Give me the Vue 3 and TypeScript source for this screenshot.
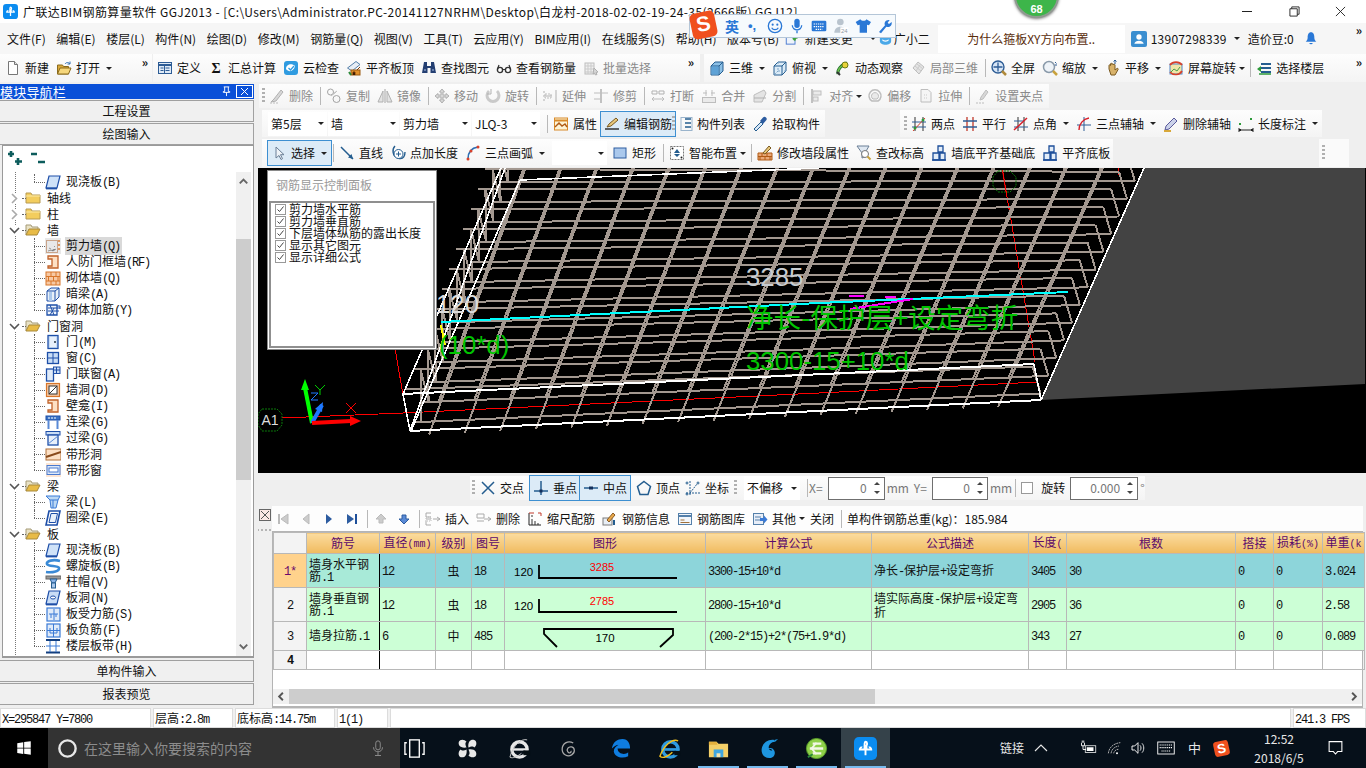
<script setup lang="ts">
import { h } from "vue";
import type { FunctionalComponent, VNode } from "vue";

// ---- small icon set, all 16x16 unless used in the taskbar (24x24) ----
const icons: Record<string, string> = {
  new: `<path d="M3.5 1.5h6l3 3v10h-9z" fill="#fff" stroke="#777"/><path d="M9.5 1.5v3h3" fill="#e4e4e4" stroke="#777"/>`,
  open: `<path d="M1.5 14V5h5l1 1.5h5V14z" fill="#d8a83a" stroke="#8a6a1c"/><path d="M1.5 14l2.5-6h11l-2.5 6z" fill="#f6d77c" stroke="#8a6a1c"/><path d="M9 4c1.5-2 3.5-2 5 0M14 1.5V4h-2.5" fill="none" stroke="#2f6fb5"/>`,
  define: `<rect x="1.5" y="2.5" width="13" height="11" fill="#dfeaf6" stroke="#2d5c95"/><path d="M1.5 5h13" stroke="#2d5c95" stroke-width="2"/><path d="M3.5 8h3M3.5 10.5h3M8.5 8h4M8.5 10.5h4M7.5 5v8.5" stroke="#2d5c95"/>`,
  sigma: `<text x="8" y="13" text-anchor="middle" font-size="14" font-weight="700" font-family="Liberation Serif" fill="#111">Σ</text>`,
  cloud: `<rect x="1" y="1" width="14" height="14" rx="3" fill="#2f9be0"/><path d="M3 9c0-5 6-6 9-3-1 5-6 7-9 3z" fill="#fff"/><path d="M5.5 8l2 2 3.5-4" fill="none" stroke="#2f9be0" stroke-width="1.3"/>`,
  flat: `<path d="M1.5 8L10 1.5l4 3L6 11z" fill="#e8eef5" stroke="#5580aa"/><rect x="5" y="10" width="9" height="5" fill="#e0902c" stroke="#9a5a10"/><path d="M7 15v-3h2v3M11 10l3-3" stroke="#7a3a08"/><path d="M3 12l2 3" stroke="#2d8a3a" stroke-width="2"/>`,
  binoc: `<path d="M3 2h3v4h4V2h3l2 11H9.5V8h-3v5H1z" fill="#243f72"/><path d="M3 10h2M11 10h2" stroke="#aac0e6"/>`,
  glasses: `<circle cx="4" cy="10" r="2.6" fill="#fff" stroke="#333" stroke-width="1.4"/><circle cx="12" cy="10" r="2.6" fill="#fff" stroke="#333" stroke-width="1.4"/><path d="M6.5 9.5h3M1.5 9L3 5M14.5 9L13 5" stroke="#333" stroke-width="1.2" fill="none"/>`,
  batch: `<rect x="2" y="3" width="9" height="11" fill="#eee" stroke="#aaa"/><path d="M2 6h9M2 9h9M2 12h9M5 3v11M8 3v11" stroke="#bbb"/><path d="M11 8l4 4-2 .5 1 2-1.500 .5-1-2-1.500 1z" fill="#ccc" stroke="#999"/>`,
  cube: `<path d="M2 6l4-4h8v9l-4 4H2z" fill="#8cc0e6" stroke="#245d8f"/><path d="M2 6h8v9M10 6l4-4" fill="none" stroke="#245d8f"/><path d="M2.500 6.500h7v8h-7z" fill="#5ea2d6"/>`,
  top: `<path d="M2 6l4-4h8v9l-4 4H2z" fill="#dcecf8" stroke="#245d8f"/><path d="M2 6h8v9M10 6l4-4" fill="none" stroke="#245d8f"/><path d="M6 2v9h8M6 11l-4 4" fill="none" stroke="#7fa6c8" stroke-dasharray="2 1"/>`,
  orbit: `<path d="M3 14c-1-4 3-9 9-11" fill="none" stroke="#1e6e2a" stroke-width="3"/><path d="M3 14c-1-4 3-9 9-11" fill="none" stroke="#6fc04e" stroke-width="1.500"/><circle cx="10" cy="5" r="3" fill="#e8d23a" stroke="#6a7a12"/><path d="M2 12l3 3" stroke="#333" stroke-width="2"/>`,
  local3d: `<path d="M3 8l5-6 6 5-5 7z" fill="#ddd" stroke="#aaa"/><path d="M5 6l6 5M7 4l6 5M6 11l4-6" stroke="#bbb"/>`,
  full: `<circle cx="7" cy="7" r="6" fill="#d8e6f6" stroke="#2d5c95" stroke-width="1.4"/><path d="M7 2.500v9M2.500 7h9" stroke="#2d5c95" stroke-width="1.300"/><path d="M11 11l4 4" stroke="#b08a3a" stroke-width="2.500"/>`,
  zoom: `<circle cx="7" cy="7" r="5.500" fill="#eef3f8" stroke="#8a9aaa" stroke-width="1.500"/><path d="M11 11l4 4" stroke="#c9a23c" stroke-width="2.500"/><path d="M13 2l1.500 1.500M13 5h2" stroke="#2d5c95"/>`,
  pan: `<path d="M4 9V5.500c0-1 1.500-1 1.500 0V4c0-1 1.500-1 1.500 0v.5c0-1 1.500-1 1.500 0V5c0-1 1.500-1 1.500 0v5l2-1.500c1-.5 1.500 .5 1 1.200L10 15H6z" fill="#d8b26a" stroke="#7a5a22"/><path d="M10 0v4M8.500 1.500L10 0l1.500 1.500" fill="none" stroke="#2d5c95"/>`,
  rotate: `<rect x="2" y="4" width="12" height="10" fill="#f0e6a8" stroke="#4f86c6"/><path d="M3 12l3-3 3 2 3-4" fill="none" stroke="#4aa04a"/><path d="M2 5a7 6 0 0 1 12 0" fill="none" stroke="#d8402a" stroke-width="1.600"/><path d="M14 11a7 6 0 0 1-12 1" fill="none" stroke="#d8402a" stroke-width="1.600"/>`,
  floors: `<path d="M5 4h10M5 8h10M5 12h10" stroke="#245d8f" stroke-width="2"/><path d="M1 9l4-3v6z" fill="#2d9a3a"/><path d="M3 14h12" stroke="#2d9a3a" stroke-width="1.500"/>`,
  del: `<path d="M2 14l5-1 7-9-2-2-7 9z" fill="#ccc" stroke="#999"/><path d="M1 15h8" stroke="#aaa" stroke-dasharray="2 1"/>`,
  copy: `<circle cx="4.500" cy="4" r="3" fill="none" stroke="#888"/><circle cx="10.500" cy="11" r="3.500" fill="none" stroke="#888"/><path d="M7 6l4-3M5 8l5-4" stroke="#aaa"/>`,
  mirror: `<path d="M8 1v14" stroke="#888"/><path d="M6 3v11H1zM10 3v11h5z" fill="#ddd" stroke="#999"/>`,
  move: `<path d="M8 1l2.500 3H9v3h3V5.500L15 8l-3 2.500V9H9v3h1.500L8 15l-2.500-3H7V9H4v1.500L1 8l3-2.500V7h3V4H5.500z" fill="#ccc" stroke="#999"/>`,
  rot: `<path d="M4 3a6 6 0 1 0 8 0" fill="none" stroke="#bbb" stroke-width="3"/><path d="M6 1v5H2" fill="none" stroke="#999"/>`,
  extend: `<path d="M14 2v12M1 4h2M1 8h9M1 12h2" stroke="#999"/><rect x="3" y="6" width="6" height="4" fill="none" stroke="#aaa" stroke-dasharray="2 1"/>`,
  trim: `<path d="M8 1v14" stroke="#999" stroke-width="1.500"/><path d="M1 5h14M1 11h6" stroke="#aaa"/>`,
  break: `<path d="M2 3h5v3H2zM9 3h5v3H9z" fill="none" stroke="#999"/><path d="M2 11h12M12 9l2 2-2 2M4 9l-2 2 2 2" fill="none" stroke="#aaa"/>`,
  merge: `<path d="M2 5h4M10 5h4M5 2v6M11 2v6" stroke="#aaa"/><rect x="1.500" y="9.500" width="13" height="5" fill="#e6e6e6" stroke="#aaa"/>`,
  split: `<path d="M2 14V7l10-5 2 3-4 9z" fill="#ddd" stroke="#aaa"/><path d="M2 10h12" stroke="#999"/>`,
  align: `<path d="M3 1v14" stroke="#999" stroke-width="1.500"/><rect x="4" y="3" width="8" height="4" fill="#e6e6e6" stroke="#aaa"/><rect x="4" y="9" width="5" height="4" fill="#e6e6e6" stroke="#aaa"/>`,
  offset: `<path d="M5 13a6 6 0 1 1 6 0z" fill="none" stroke="#aaa" stroke-width="1.500"/><path d="M6 11a3.500 3.500 0 1 1 4 0z" fill="#e6e6e6" stroke="#aaa"/>`,
  stretch: `<path d="M3 1.500h7l3 3V14H3z" fill="#f4f4f4" stroke="#aaa"/><path d="M6 7h4M6 10h4" stroke="#bbb" stroke-dasharray="1 1"/>`,
  grip: `<path d="M1 15h9" stroke="#aaa" stroke-dasharray="2 1"/><path d="M5 12l1-3 5-7 2 2-5 7z" fill="#ccc" stroke="#aaa"/>`,
  attr: `<rect x="1.500" y="2" width="13" height="12" fill="#fdf4d6" stroke="#d88a2a"/><path d="M1.500 4.500h13" stroke="#d88a2a" stroke-width="2"/><path d="M2 11l4-4 3 3 3-2 2 3" fill="none" stroke="#b05a14" stroke-width="1.400"/>`,
  editbar: `<path d="M1 13h14" stroke="#333" stroke-width="1.500"/><path d="M3 11l2-3 7-6 2 2-7 6z" fill="#e8c87a" stroke="#7a5a22"/>`,
  list: `<path d="M8 3h6M8 7h6M8 11h6" stroke="#245d8f" stroke-width="1.600"/><rect x="4" y="1.500" width="11" height="13" fill="none" stroke="#9ab4cc"/>`,
  pick: `<path d="M4 15l-2-2 7-7 2 2z" fill="#d7e6f6" stroke="#245d8f"/><path d="M8 5l3-3.500c1-1 2-1 3 0s1 2 0 3L11 8z" fill="#2d5ca0"/>`,
  two: `<path d="M4 1v14M12 1v14" stroke="#333"/><path d="M1 6h14M1 11h14" stroke="#2d5c95"/><path d="M2 15L14 2" stroke="#d8402a"/><circle cx="4" cy="12" r="1.500" fill="#2d9a3a"/><circle cx="12" cy="4" r="1.500" fill="#2d9a3a"/>`,
  para: `<path d="M5 1v14M11 1v14" stroke="#c0392b" stroke-width="1.300"/><path d="M1 5h14M1 11h14" stroke="#2d5c95" stroke-width="1.300"/>`,
  angle: `<path d="M5 1v14M11 1v14" stroke="#333"/><path d="M1 11h14M1 5h10" stroke="#2d5c95"/><path d="M1 14L14 2" stroke="#d8202a" stroke-width="1.500"/>`,
  arcaxis: `<path d="M8 1v14M1 9h14" stroke="#2d5c95"/><path d="M3 14c0-6 4-11 10-12" fill="none" stroke="#d8202a" stroke-width="1.400"/>`,
  delaxis: `<path d="M2 14l1-4 8-8 3 3-8 8z" fill="#cbd2ea" stroke="#5a5a9a"/><path d="M1 15h7" stroke="#d8a83a" stroke-width="2"/>`,
  dim: `<path d="M1 12v4M15 12v4M1 14h14" stroke="#222"/><path d="M3 14l-2 0M13 14h2" stroke="#222" stroke-width="2"/><rect x="1" y="7" width="2" height="2" fill="#2d9a3a"/><rect x="12" y="2" width="2" height="2" fill="#2d9a3a"/>`,
  cursor: `<path d="M5 2v11l3-2.500 2 4 1.500-.8-2-4H13z" fill="#eef3f8" stroke="#6a7f96"/>`,
  line: `<path d="M2 2l12 12" stroke="#245d8f" stroke-width="1.500"/><path d="M14 14l-5-1.500 3.500-3.500z" fill="#245d8f"/>`,
  ptlen: `<path d="M5 1c-3 3-3 10 3 12s7-3 7-6" fill="none" stroke="#245d8f" stroke-width="1.400"/><circle cx="8.500" cy="9" r="4.500" fill="#fff" stroke="#245d8f"/><path d="M8.500 6.500v5M6 9h5" stroke="#245d8f"/>`,
  arc: `<path d="M3 14C3 8 6 3 13 2" fill="none" stroke="#2d6fb5" stroke-width="1.600"/><circle cx="3" cy="14" r="1.500" fill="#d8402a"/><circle cx="6" cy="6" r="1.500" fill="#d8402a"/><circle cx="13" cy="2" r="1.500" fill="#d8402a"/>`,
  rect: `<rect x="2" y="3" width="12" height="10" fill="#aac8ec" stroke="#2d5ca0"/>`,
  smart: `<rect x="1.500" y="1.500" width="13" height="13" fill="#fff" stroke="#777" stroke-dasharray="2 1"/><path d="M8 4L5 8h6zM8 12l-3-3h6z" fill="#245d8f"/><circle cx="3.500" cy="3.500" r="1" fill="#222"/><circle cx="12.500" cy="12.500" r="1" fill="#222"/>`,
  wallattr: `<path d="M1 8h14v7H1z" fill="#e9a878" stroke="#b05a14"/><path d="M1 11.500h14M5 8v3.500M10 8v3.500M3 11.500V15M8 11.500V15M13 11.500V15" stroke="#b05a14"/><path d="M6 8l6-7 2 2-6 6z" fill="#e8c87a" stroke="#7a5a22"/>`,
  height: `<path d="M1 1h12l-4 7v4l-3 1V8z" fill="#dfe8f2" stroke="#6a7f96"/><circle cx="9" cy="9" r="3.500" fill="#fff" stroke="#777"/><path d="M11.500 11.500l3 3" stroke="#c9a23c" stroke-width="2"/>`,
  walltrim: `<path d="M7 1h5v6H7zM2 8h6v7H2zM9 8h5v7H9z" fill="#e3edf8" stroke="#1e4f9a" stroke-width="1.300"/><path d="M1 15h14" stroke="#1e4f9a" stroke-width="1.500"/>`,
  cross: `<path d="M2 2l12 12M14 2L2 14" stroke="#245d8f" stroke-width="1.500"/>`,
  perp: `<path d="M1 11h14" stroke="#245d8f" stroke-width="1.500"/><path d="M8 1v14" stroke="#245d8f" stroke-width="1.500"/><rect x="6.500" y="9.500" width="3" height="3" fill="#122f5c"/>`,
  mid: `<path d="M1 8h14" stroke="#245d8f" stroke-width="1.500"/><rect x="6" y="6.500" width="4" height="3" fill="#122f5c"/>`,
  vertex: `<path d="M8 1.500l6.500 5L12 14.500H4L1.500 6.500z" fill="none" stroke="#245d8f" stroke-width="1.500"/>`,
  coord: `<path d="M1 13h14M5 1v14M5 13l7-9" stroke="#245d8f" stroke-dasharray="2 1"/><circle cx="2" cy="3" r="1" fill="none" stroke="#245d8f"/><circle cx="13" cy="3" r="1" fill="none" stroke="#245d8f"/><circle cx="2" cy="14" r="1" fill="none" stroke="#245d8f"/>`,
  first: `<rect x="3" y="3" width="2" height="10" fill="#bbb"/><path d="M13 3v10L6 8z" fill="#ccc" stroke="#bbb"/>`,
  prev: `<path d="M11 3v10L5 8z" fill="#ccc" stroke="#bbb"/>`,
  next: `<path d="M5 3v10l6-5z" fill="#2d5ca0"/>`,
  last: `<path d="M3 3v10l7-5z" fill="#2d5ca0"/><rect x="11" y="3" width="2" height="10" fill="#1e4f9a"/>`,
  up: `<path d="M8 3l5 5h-3v4H6V8H3z" fill="#ccc" stroke="#bbb"/>`,
  down: `<path d="M8 13l5-5h-3V4H6v4H3z" fill="#5a8ad6" stroke="#2d5ca0"/>`,
  insert: `<path d="M1 2h5M1 8h5M1 14h5M1 2v4h5M1 10v4" fill="none" stroke="#aaa"/><path d="M8 8h7M12 6l3 2-3 2" fill="none" stroke="#aaa"/><rect x="1" y="6" width="5" height="4" fill="none" stroke="#bbb" stroke-dasharray="1 1"/>`,
  rowdel: `<path d="M1 3h7v4H1zM1 10h7" fill="none" stroke="#aaa"/><path d="M8 8h7M12 6l3 2-3 2" fill="none" stroke="#aaa"/>`,
  scale: `<path d="M2 2v12h12" fill="none" stroke="#222"/><path d="M2 2h5M11 2h3M14 2v3" stroke="#c0392b"/><path d="M5 14V8M8 14V10M11 14V12M4 5h2" stroke="#333"/>`,
  info: `<rect x="1" y="7" width="9" height="7" fill="#e8eef5" stroke="#7a7a7a"/><path d="M5 9l6-7 2 2-6 7z" fill="#e8a84a" stroke="#8a5a22"/><path d="M12 9v5" stroke="#245d8f" stroke-width="2"/>`,
  lib: `<rect x="1.500" y="2.500" width="13" height="11" fill="#f2f6fb" stroke="#5580aa"/><path d="M1.500 5h13" stroke="#5580aa" stroke-width="2"/><path d="M3.500 9h4M3.500 11.500h9" stroke="#a0703a"/>`,
  other: `<rect x="1.500" y="2.500" width="10" height="11" fill="#e8eef8" stroke="#5580aa"/><path d="M3 6h6M3 9h6" stroke="#5580aa"/><path d="M8 7h4V4.500L15.500 8.500 12 12.500V10H8z" fill="#3a7ad6"/>`,
  slab: `<path d="M4 2h11l-3 12H1z" fill="#cfe2f8" stroke="#1e4fa8" stroke-width="1.200"/><path d="M1 14.500h11" stroke="#1e4fa8" stroke-width="1.800"/>`,
  closed: `<path d="M1 13V3h5l1 2h8v8z" fill="#f3cd5e" stroke="#b79a52"/><path d="M1 6h14" stroke="#fbeaa8"/>`,
  opened: `<path d="M1 13V3h5l1 2h6v2" fill="#e9e2c6" stroke="#a59a76"/><path d="M1 13l3-6h11l-3 6z" fill="#e8bb46" stroke="#a98a3a"/>`,
  shear: `<rect x="1.500" y="2.500" width="11" height="12" fill="#e8e8e8" stroke="#c9a48a"/><path d="M3 13l3-1 2 1 3-2M4 10l2 1M9 8l1 1" stroke="#999"/><path d="M14 2v2M14 6v2M14 10v2" stroke="#d8762a" stroke-width="1.400"/>`,
  frame: `<path d="M3 2h10v12H3v-2h4V5H3z" fill="#fde0c4" stroke="#c0622a" stroke-width="1.300"/>`,
  brick: `<rect x="1" y="2" width="14" height="13" fill="#f7c9a4" stroke="#d8762a"/><path d="M1 6.500h14M1 11h14M6 2v4.500M11 2v4.500M3.500 6.500V11M8.500 6.500V11M13 6.500V11M6 11v4M11 11v4" stroke="#d8762a"/>`,
  hidden: `<path d="M2 5l4-3h8v9l-4 4H2z" fill="#e8f0f8" stroke="#1e4fa8"/><path d="M2 5h8v10M10 5l4-3" fill="none" stroke="#1e4fa8"/><rect x="4" y="6" width="3" height="9" fill="#aac8ec"/>`,
  brickbar: `<path d="M2 3h10v10H2z" fill="#f0f5fb" stroke="#1e4fa8" stroke-width="1.300"/><path d="M3 6h12M3 9h11M5 3l4 10M9 6L5 13" stroke="#1e4fa8"/><path d="M12 4h3v3" fill="none" stroke="#1e4fa8"/>`,
  door: `<rect x="3" y="1.500" width="10" height="13" fill="#c9ddf6" stroke="#1e4fa8" stroke-width="1.300"/><rect x="5" y="3" width="6" height="10" fill="#e8f0fb"/><circle cx="10" cy="8" r=".9" fill="#123"/>`,
  win: `<rect x="2.500" y="2.500" width="11" height="11" fill="#c9ddf6" stroke="#1e4fa8" stroke-width="1.300"/><path d="M8 2.500v11M2.500 8h11" stroke="#1e4fa8"/>`,
  doorwin: `<rect x="1.500" y="3" width="7" height="12" fill="#e0ebf9" stroke="#1e4fa8" stroke-width="1.300"/><rect x="8.500" y="1" width="6.500" height="6.500" fill="#c9ddf6" stroke="#1e4fa8"/><path d="M11.500 1v6.500M8.500 4h6.500" stroke="#1e4fa8"/>`,
  hole: `<rect x="1.500" y="1.500" width="13" height="13" fill="#f7c9a4" stroke="#d8762a" stroke-width="1.200"/><rect x="4" y="4" width="8" height="8" fill="#fff" stroke="#333"/><path d="M4 12l8-8" stroke="#333"/>`,
  link: `<rect x="1" y="2" width="14" height="4" fill="#3a74c6" stroke="#1e4fa8"/><path d="M3.500 6v9M12.500 6v9" stroke="#5a8ad6" stroke-width="2"/><path d="M4 3v2M7 3v2M10 3v2" stroke="#fff"/>`,
  lintel: `<rect x="1" y="1.500" width="14" height="3.500" fill="#c9ddf6" stroke="#1e4fa8"/><rect x="3" y="5" width="10" height="10" fill="#e8f0fb" stroke="#1e4fa8" stroke-width="1.300"/><path d="M3 14l10-8" stroke="#5a8ad6"/>`,
  stripH: `<rect x="1" y="3" width="15" height="11" fill="#fde0c4" stroke="#b0703a"/><path d="M1 11l15-5" stroke="#8a4a1a" stroke-width="2"/>`,
  stripW: `<rect x="1" y="1" width="15" height="14" fill="#fde6d4"/><rect x="2" y="3.500" width="13" height="9" fill="#dde9f9" stroke="#4a7ad0"/><rect x="4" y="6" width="9" height="4" fill="#fff" stroke="#4a7ad0"/>`,
  beam: `<path d="M1 2h14L13 6l-2 8H6L5 6z" fill="#bcd8f4" stroke="#3a7ad6"/><path d="M5 6h8M8 6v8" stroke="#3a7ad6"/>`,
  ring: `<path d="M4 1h11l-3 14H1z" fill="#fff" stroke="#1e4fa8" stroke-width="1.600"/><path d="M6 3.500h6.500L10.500 12.500H4z" fill="#e8f0fb" stroke="#1e4fa8"/>`,
  spiral: `<path d="M15 3C8 1 1 3 2 6s11 1 12 4-6 5-13 4" fill="none" stroke="#3a8ad6" stroke-width="2.600"/>`,
  cap: `<rect x="1" y="2" width="15" height="3" fill="#999" stroke="#666"/><path d="M5 5h7l-2 4H7z" fill="#8ab4e8" stroke="#245d8f"/><rect x="6.500" y="9" width="4" height="5" fill="#aac8ec" stroke="#245d8f"/>`,
  slabhole: `<path d="M4 1h11l-3 13H1z" fill="#c9ddf6" stroke="#1e4fa8" stroke-width="1.200"/><ellipse cx="8" cy="7.500" rx="2.500" ry="1.500" fill="#fff" stroke="#1e4fa8"/><path d="M1 14.500h11" stroke="#1e4fa8" stroke-width="1.800"/>`,
  slabbar: `<rect x="2" y="2" width="13" height="13" fill="#e0ebf9" stroke="#3a7ad6" stroke-width="1.200"/><path d="M9 3v11M4 8h9M6 8v4M11 8v3" stroke="#3a7ad6"/>`,
  negbar: `<rect x="2" y="2" width="13" height="13" fill="#e0ebf9" stroke="#3a7ad6" stroke-width="1.200"/><path d="M8.500 2v13M2 8.500h13M5 6v5h7V6" fill="none" stroke="#3a7ad6"/>`,
  band: `<path d="M1 2h14M1 14.500h14" stroke="#123f80" stroke-width="1.800"/><path d="M5 3v11M11 3v11M1 8h14" stroke="#3a7ad6"/>`,
  // taskbar, 24x24
  start: `<path d="M3 5.500l8-1.200V11.500H3zM12.200 4.100L21 3v8.500h-8.800zM3 12.700h8v7.200l-8-1.200zM12.200 12.700H21V21l-8.800-1.200z" fill="#fff"/>`,
  ring24: `<circle cx="12" cy="12" r="8.500" fill="none" stroke="#e8e8e8" stroke-width="2.500"/>`,
  micro: `<rect x="9" y="2.500" width="6" height="12" rx="3" fill="none" stroke="#8c8c8c" stroke-width="1.300"/><path d="M6 11c0 8 12 8 12 0M12 17.500V22M8 22h8" fill="none" stroke="#8c8c8c" stroke-width="1.300"/>`,
  taskview: `<rect x="7" y="3" width="10" height="18" fill="none" stroke="#fff" stroke-width="1.400"/><path d="M4 6H2v12h2M20 6h2v12h-2" fill="none" stroke="#fff" stroke-width="1.400"/>`,
  fan: `<path d="M11 11C4 12 2 8 3 5s6-3 8 0c-2 1-1 4 0 6zM13 11c-1-7 3-9 6-8s3 6 0 8c-1-2-4-1-6 0zM13 13c7-1 9 3 8 6s-6 3-8 0c2-1 1-4 0-6zM11 13c1 7-3 9-6 8s-3-6 0-8c1 2 4 1 6 0z" fill="#e8e8e8"/>`,
  iedark: `<circle cx="12" cy="13" r="8" fill="none" stroke="#e8e8e8" stroke-width="3.500"/><path d="M5 13h14" stroke="#e8e8e8" stroke-width="2.500"/><path d="M20 3C14 1 5 9 2 21c3 2 8-1 12-4" fill="none" stroke="#c8c8c8"/><rect x="16" y="14" width="7" height="5" fill="#060f14"/>`,
  swirl: `<path d="M18 5C11 1 4 6 4 13s7 10 12 7 4-9 0-10-7 3-5 6 5 1 4-1" fill="none" stroke="#a8a8a8" stroke-width="1.600"/>`,
  edge: `<path d="M3 12C4 5 9 2 14 2c6 0 8 5 8 10H9c0 6 8 7 11 4v4c-6 3-14 1-15-5 0-3 2-6 6-7-4 0-6 2-8 4z" fill="#0f7de0"/><path d="M9 9h7c0-4-6-4-7 0z" fill="#0f7de0"/>`,
  ie: `<circle cx="13" cy="13" r="8" fill="none" stroke="#2f9be0" stroke-width="3.600"/><path d="M6 13h14" stroke="#2f9be0" stroke-width="2.800"/><rect x="17" y="14.500" width="6" height="4.500" fill="#060f14"/><path d="M21 4C15 1 6 9 2 20c3 3 9 0 13-4" fill="none" stroke="#f0c020" stroke-width="1.500"/>`,
  folder: `<path d="M2 5h8l2 2h10v14H2z" fill="#f4d068"/><path d="M2 5h8l1 3H2z" fill="#e5b13c"/><rect x="7" y="13" width="10" height="8" fill="#3fa6e0"/><rect x="10" y="17" width="4" height="4" fill="#f4e4b0"/>`,
  bird: `<path d="M19 3c-6-1-12 3-13 9s3 10 8 10c4 0 7-4 5-8s-7-3-7 0c1-2 4-2 5 0-4 1-5-4-2-7 1-1 3-2 5-2z" fill="#1e96e0"/><path d="M19 3l4-1-3 3z" fill="#1e96e0"/>`,
  green: `<circle cx="12" cy="12" r="10.500" fill="#8ed048" stroke="#5aa02a"/><path d="M5 12h14M8 7h9M8 17h9" stroke="#f2f8e4" stroke-width="2.400"/><path d="M3 21l5-3" stroke="#2c8a3a" stroke-width="2"/><path d="M12 6l-5 6 5 6" fill="none" stroke="#f2f8e4" stroke-width="2"/>`,
  app: `<rect x="0" y="0" width="24" height="24" rx="5" fill="#0b8cf0"/><path d="M12 5c2 0 2 3 1 4v4h5c0-2-2-2-2-3M12 5c-1 0-1 3-1 4v4H6c0-2 2-2 2-3M12 13v6" fill="none" stroke="#fff" stroke-width="2"/>`,
  chevup: `<path d="M4 16l8-8 8 8" fill="none" stroke="#e8e8e8" stroke-width="1.500"/>`,
  battery: `<rect x="7" y="9" width="14" height="9" fill="none" stroke="#fff"/><rect x="9" y="11" width="9" height="5" fill="#fff"/><path d="M2 5v4h4V5M4 9v5h4M3 2v3M5 2v3" fill="none" stroke="#fff" stroke-width="1.200"/>`,
  wifi: `<path d="M2 20C3 11 10 5 20 4M6 20c1-6 5-10 12-11M10 20c.5-3 3-6 7-6" fill="none" stroke="#aaa" stroke-width="1.500" stroke-dasharray="3 1"/><circle cx="15" cy="20" r="1.500" fill="#fff"/>`,
  speaker: `<path d="M3 9h4l5-5v16l-5-5H3z" fill="none" stroke="#fff" stroke-width="1.400"/><path d="M15 8c2 2 2 6 0 8M18 5c3.500 3.500 3.500 10.500 0 14" fill="none" stroke="#fff" stroke-width="1.300"/>`,
  keys: `<rect x="1" y="4" width="22" height="16" fill="none" stroke="#fff" stroke-width="1.200"/><path d="M3.500 8h17M3.500 11.500h17M6 16h12" stroke="#fff" stroke-width="1.500" stroke-dasharray="1.500 1"/>`,
  notify: `<path d="M3 3h18v14h-6l-3 3.500L9 17H3z" fill="none" stroke="#fff" stroke-width="1.500"/>`,
  // sogou bar
  smile: `<circle cx="12" cy="12" r="10" fill="none" stroke="#2a78d6" stroke-width="2"/><circle cx="8.500" cy="10" r="1.600" fill="#2a78d6"/><circle cx="15.500" cy="10" r="1.600" fill="#2a78d6"/><path d="M7 14.500c2 4 8 4 10 0" fill="none" stroke="#2a78d6" stroke-width="1.800"/>`,
  smic: `<rect x="8" y="1" width="8" height="14" rx="4" fill="#2a78d6"/><path d="M5 11c0 9 14 9 14 0M12 19v4" fill="none" stroke="#2a78d6" stroke-width="2"/>`,
  skeys: `<rect x="1" y="4" width="22" height="16" rx="2" fill="#2a78d6"/><path d="M4 9h16M4 13h16M7 17h10" stroke="#fff" stroke-width="1.800" stroke-dasharray="2 1.200"/>`,
  sperson: `<circle cx="11" cy="6" r="5" fill="#b9c4ce"/><path d="M2 22c0-12 18-12 18 0z" fill="#b9c4ce"/><rect x="11" y="14" width="12" height="9" fill="#fff"/><text x="17" y="22" text-anchor="middle" font-size="9" fill="#8a98a6" font-family="Liberation Sans">24</text>`,
  sshirt: `<path d="M8 2L1 6l3 5 3-1v12h11V10l3 1 3-5-7-4c-1 3-7 3-9 0z" fill="#2a78d6"/>`,
  swrench: `<path d="M3 21l9-10c-2-4 1-9 7-8l-3 4 2 2 4-3c1 6-4 9-8 7L6 23z" fill="#2a78d6"/>`,
  user: `<rect width="24" height="24" rx="3" fill="#3a8ed0"/><circle cx="12" cy="9" r="4" fill="#fff"/><path d="M5 19c1-6 13-6 14 0z" fill="#fff"/>`,
  bell: `<path d="M12 2c-4 0-5 4-5 8 0 3-2 5-3 6h16c-1-1-3-3-3-6 0-4-1-8-5-8z" fill="#2a78d6"/><path d="M9.500 18a2.500 2 0 0 0 5 0z" fill="#2a78d6"/>`,
  change: `<rect x="2" y="2" width="14" height="19" fill="#eef3fa" stroke="#4a7ad0" stroke-width="1.500"/><path d="M12 11h8M16 7v8M16 15l-3-3" stroke="#3aa23a" stroke-width="2.600"/>`,
  bot: `<path d="M3 8h18v8c0 4-4 6-9 6s-9-2-9-6z" fill="#4aa8e8"/><path d="M4 4l3 4M20 4l-3 4" stroke="#4aa8e8" stroke-width="2"/><path d="M7 14c2 3 8 3 10 0" fill="none" stroke="#fff" stroke-width="1.800"/>`,
};

// ---- toolbars, written as one token list per strip ----
type Item =
  | { kind: "tool"; icon: string; label: string; caret: number; on: boolean; off: boolean }
  | { kind: "sep" | "grip" | "more" | "check" }
  | { kind: "combo"; label: string; width: number; gap: number }
  | { kind: "spin"; label: string; width: number }
  | { kind: "text"; label: string };

function parse(spec: string): Item[] {
  return spec
    .trim()
    .split(/\s+/)
    .map((tok): Item => {
      if (tok === "|") return { kind: "sep" };
      if (tok === "#") return { kind: "grip" };
      if (tok === ">>") return { kind: "more" };
      if (tok === "[]") return { kind: "check" };
      if (tok[0] === "'") return { kind: "text", label: tok.slice(1) };
      if (tok[0] === "=") {
        const [label, width, gap] = tok.slice(1).split(",");
        return { kind: "combo", label, width: +width, gap: +(gap ?? 1) };
      }
      if (tok[0] === "%") {
        const [label, width] = tok.slice(1).split(",");
        return { kind: "spin", label, width: +width };
      }
      const on = tok[0] === "*";
      const off = tok[0] === "~";
      const bare = on || off ? tok.slice(1) : tok;
      const caret = bare.endsWith("^^") ? 2 : bare.endsWith("^") ? 1 : 0;
      const [icon, label = ""] = bare.replace(/\^+$/, "").split(":");
      return { kind: "tool", icon, label, caret, on, off };
    });
}

function renderItem(it: Item, i: number): VNode {
  switch (it.kind) {
    case "sep":
      return h("i", { key: i, class: "sep" });
    case "grip":
      return h("i", { key: i, class: "grip" });
    case "more":
      return h("span", { key: i, class: "more" }, "»");
    case "check":
      return h("i", { key: i, class: "box" });
    case "text":
      return h("span", { key: i, class: "plain" }, it.label);
    case "combo":
      return h("div", { key: i, class: "combo", style: { width: it.width + "px", marginRight: it.gap - 7 + "px" } }, [
        h("span", it.label),
        h("i", { class: "caret" }),
      ]);
    case "spin":
      return h("div", { key: i, class: "spin", style: { width: it.width + "px" } }, [
        h("span", it.label),
        h("b", [h("i", { class: "tri-up" }), h("i", { class: "caret" })]),
      ]);
    default:
      return h("div", { key: i, class: ["tool", { on: it.on, off: it.off, wide: it.caret === 1, tight: it.caret === 2 }] }, [
        h("svg", { class: "ic", viewBox: "0 0 16 16", innerHTML: icons[it.icon] }),
        it.label ? h("span", it.label) : null,
        it.caret ? h("i", { class: "caret" }) : null,
      ]);
  }
}

// rendered from a function so that all six bars share one markup; its classes live in the plain style block
const Strip: FunctionalComponent<{ spec: string; cls?: string }> = ({ spec, cls }) =>
  h("div", { class: ["strip", cls] }, parse(spec).map(renderItem));

const bar1a = "new:新建 open:打开^ >>";
const bar1b =
  "define:定义 sigma:汇总计算 cloud:云检查 flat:平齐板顶 binoc:查找图元 glasses:查看钢筋量 ~batch:批量选择 >>";
const bar1c =
  "cube:三维^ top:俯视^ orbit:动态观察 ~local3d:局部三维 | full:全屏 zoom:缩放^ pan:平移^ rotate:屏幕旋转^^ | floors:选择楼层 >>";
const bar2 =
  "# del:删除 | copy:复制 mirror:镜像 | move:移动 rot:旋转 | extend:延伸 trim:修剪 | break:打断 merge:合并 split:分割 | align:对齐^^ offset:偏移 stretch:拉伸 | grip:设置夹点";
const bar3a =
  "=第5层,59 =墙,71 =剪力墙,71 =JLQ-3,68,7 | attr:属性 *editbar:编辑钢筋 # list:构件列表 pick:拾取构件";
const bar3b = "# two:两点 para:平行 angle:点角^ arcaxis:三点辅轴^ delaxis:删除辅轴 dim:长度标注^";
const bar4 =
  "*cursor:选择^ | line:直线 ptlen:点加长度 arc:三点画弧^ =,55,5 rect:矩形 | smart:智能布置^^ | wallattr:修改墙段属性 height:查改标高 walltrim:墙底平齐基础底 walltrim:平齐底板";
const barSnap =
  "# cross:交点 *perp:垂点 *mid:中点 vertex:顶点 coord:坐标 # =不偏移,56,11 | 'X= %0,57 'mm 'Y= %0,56 'mm | [] '旋转 %0.000,68 '°";
const barTable =
  "first prev next last | up down | insert:插入 rowdel:删除 scale:缩尺配筋 info:钢筋信息 lib:钢筋图库 other:其他^^ '关闭 | '单构件钢筋总重(kg)：185.984";

const menus = ["文件(F)", "编辑(E)", "楼层(L)", "构件(N)", "绘图(D)", "修改(M)", "钢筋量(Q)", "视图(V)", "工具(T)", "云应用(Y)", "BIM应用(I)", "在线服务(S)", "帮助(H)", "版本号(B)"];
const panelChecks = ["剪力墙水平筋", "剪力墙垂直筋", "下层墙体纵筋的露出长度", "显示其它图元", "显示详细公式"];

// ---- navigation tree ----
type Node = { t: string; icon: string; folder?: "open" | "closed"; last?: boolean; sel?: boolean };
const tree: Node[] = [
  { t: "现浇板(B)", icon: "slab", last: true },
  { t: "轴线", icon: "closed", folder: "closed" },
  { t: "柱", icon: "closed", folder: "closed" },
  { t: "墙", icon: "opened", folder: "open" },
  { t: "剪力墙(Q)", icon: "shear", sel: true },
  { t: "人防门框墙(RF)", icon: "frame" },
  { t: "砌体墙(Q)", icon: "brick" },
  { t: "暗梁(A)", icon: "hidden" },
  { t: "砌体加筋(Y)", icon: "brickbar", last: true },
  { t: "门窗洞", icon: "opened", folder: "open" },
  { t: "门(M)", icon: "door" },
  { t: "窗(C)", icon: "win" },
  { t: "门联窗(A)", icon: "doorwin" },
  { t: "墙洞(D)", icon: "hole" },
  { t: "壁龛(I)", icon: "frame" },
  { t: "连梁(G)", icon: "link" },
  { t: "过梁(G)", icon: "lintel" },
  { t: "带形洞", icon: "stripH" },
  { t: "带形窗", icon: "stripW", last: true },
  { t: "梁", icon: "opened", folder: "open" },
  { t: "梁(L)", icon: "beam" },
  { t: "圈梁(E)", icon: "ring", last: true },
  { t: "板", icon: "opened", folder: "open" },
  { t: "现浇板(B)", icon: "slab" },
  { t: "螺旋板(B)", icon: "spiral" },
  { t: "柱帽(V)", icon: "cap" },
  { t: "板洞(N)", icon: "slabhole" },
  { t: "板受力筋(S)", icon: "slabbar" },
  { t: "板负筋(F)", icon: "negbar" },
  { t: "楼层板带(H)", icon: "band", last: true },
  { t: "基础", icon: "opened", folder: "open" },
];

// latin runs are set in a fixed font, the way the original's bitmap font looks
const runs = (text: string) =>
  text
    .split(/([\x00-\x7f]+)/)
    .filter(Boolean)
    .map((s) => ({ s, fixed: /^[\x00-\x7f]/.test(s) }));

// ---- rebar table ----
const columns = [33, 73, 56, 36, 33, 201, 166, 157, 38, 169, 38, 49, 42];
const headers = ["", "筋号", "直径(mm)", "级别", "图号", "图形", "计算公式", "公式描述", "长度(", "根数", "搭接", "损耗(%)", "单重(k"];
const rows = [
  { no: "1*", name: "墙身水平钢筋.1", dia: "12", grade: "虫", fig: "18", shape: "3285", formula: "3300-15+10*d", desc: "净长-保护层+设定弯折", len: "3405", count: "30", weight: "3.024", cls: "cur" },
  { no: "2", name: "墙身垂直钢筋.1", dia: "12", grade: "虫", fig: "18", shape: "2785", formula: "2800-15+10*d", desc: "墙实际高度-保护层+设定弯折", len: "2905", count: "36", weight: "2.58", cls: "data" },
  { no: "3", name: "墙身拉筋.1", dia: "6", grade: "中", fig: "485", shape: "", formula: "(200-2*15)+2*(75+1.9*d)", desc: "", len: "343", count: "27", weight: "0.089", cls: "data low" },
];

// ---- 3D wall view: two layers of rebar mesh, in screen coordinates ----
type Pt = [number, number];
const seg = (a: Pt, b: Pt) => `M${a[0].toFixed(1)} ${a[1].toFixed(1)}L${b[0].toFixed(1)} ${b[1].toFixed(1)}`;

function layer(bl: Pt, br: Pt, shift: number) {
  const at = (u: number, v: number): Pt => {
    const lx = bl[0] + v * 7.2;
    const ly = bl[1] - v * 20;
    const rx = br[0] + v * 7.86;
    const ry = br[1] - v * 17.7;
    return [lx + (rx - lx) * u, ly + (ry - ly) * u];
  };
  let d = "";
  for (let k = 0; k < 15; k++) d += seg(at(-0.012, k + 0.2), at(1.0, k + 0.2));
  for (let j = 0; j < 17; j++) {
    const u = (j + shift) / 17.4;
    d += seg(at(u, -0.45), at(u, 15));
  }
  return { d, at };
}
const front = layer([421, 426], [1040, 397], 0.35);
const back = layer([413, 393], [1032, 370], 0.85);
let ties = "";
for (let k = 0; k < 14; k++) {
  ties += seg(front.at(0, k + 0.2), back.at(0, k + 1.2));
  ties += seg(back.at(0, k + 1.2), front.at(0, k + 1.2));
  ties += seg(front.at(1, k + 0.2), back.at(1, k + 0.2));
}
const mesh = front.d + back.d + ties;
</script>

<template>
  <div class="screen">
    <header class="titlebar">
      <svg class="logo" viewBox="0 0 24 24" v-html="icons.app"></svg>
      <span class="title">广联达BIM钢筋算量软件 GGJ2013 - [C:\Users\Administrator.PC-20141127NRHM\Desktop\白龙村-2018-02-02-19-24-35(2666版) GGJ12]</span>
      <div class="winbtns">
        <i class="min"></i>
        <svg viewBox="0 0 12 12" class="restore"><path d="M3 3V1h8v8H9M1 3h8v8H1z" fill="none" stroke="#222" /></svg>
        <svg viewBox="0 0 12 12" class="close"><path d="M1 1l10 10M11 1L1 11" stroke="#222" /></svg>
      </div>
    </header>

    <nav class="menubar">
      <span v-for="m in menus" :key="m" class="menu">{{ m }}</span>
      <div class="menu-extra change">
        <svg viewBox="0 0 24 24" v-html="icons.change"></svg>
        <span>新建变更</span><i class="tri"></i>
      </div>
      <div class="menu-extra bot">
        <svg viewBox="0 0 24 24" v-html="icons.bot"></svg>
        <span>广小二</span>
      </div>
      <div class="ask">为什么箍板XY方向布置..</div>
      <div class="menu-extra account">
        <svg viewBox="0 0 24 24" v-html="icons.user"></svg>
        <span class="phone">13907298339</span><i class="tri"></i>
      </div>
      <span class="beans">造价豆:0</span>
      <svg class="bell" viewBox="0 0 24 24" v-html="icons.bell"></svg>
      <span class="menu-more">»</span>
    </nav>

    <div class="toprow">
      <Strip :spec="bar1a" cls="s1a" />
      <Strip :spec="bar1b" cls="s1b" />
      <Strip :spec="bar1c" cls="s1c" />
    </div>

    <main class="body">
      <aside class="side">
        <div class="side-head">
          <span>模块导航栏</span>
          <svg class="pin" viewBox="0 0 12 12"><path d="M3 1h6M4 1v5H2.500v1h7V6H8V1M6 7v4" fill="none" stroke="#fff" /></svg>
          <svg class="side-x" viewBox="0 0 17 13"><rect x=".5" y=".5" width="16" height="12" fill="none" stroke="#fff" /><path d="M5 3l7 7M12 3l-7 7" stroke="#fff" /></svg>
        </div>
        <button class="side-btn">工程设置</button>
        <button class="side-btn">绘图输入</button>
        <div class="tree-box">
          <div class="tree-tools">
            <svg viewBox="0 0 16 16"><path d="M4 1v6M1 4h6M11 8v7M8 11.500h7" stroke="#0d5c5c" stroke-width="2.600" /></svg>
            <svg viewBox="0 0 16 16"><path d="M1 4h6M8 12h7" stroke="#0d5c5c" stroke-width="2.600" /></svg>
          </div>
          <div class="tree-main">
            <ul class="tree">
              <li
                v-for="(n, i) in tree"
                :key="i"
                :class="n.folder ? 'top' : ['leaf', { last: n.last }]"
              >
                <svg v-if="n.folder" class="exp" viewBox="0 0 11 11">
                  <path :d="n.folder === 'open' ? 'M1 3l4.500 4.500L10 3' : 'M3 1l4.500 4.500L3 10'" fill="none" :stroke="n.folder === 'open' ? '#555' : '#aaa'" stroke-width="1.600" />
                </svg>
                <svg class="ti" :class="{ seled: n.sel }" viewBox="0 0 16 16" v-html="icons[n.icon]"></svg>
                <span class="tl" :class="{ sel: n.sel }">
                  <span v-for="(p, j) in runs(n.t)" :key="j" :class="{ fixed: p.fixed }">{{ p.s }}</span>
                </span>
              </li>
            </ul>
            <div class="vscroll">
              <svg viewBox="0 0 16 16"><path d="M4 10l4-4 4 4" fill="none" stroke="#666" stroke-width="2" /></svg>
              <div class="vtrack"><i class="vthumb"></i></div>
              <svg viewBox="0 0 16 16"><path d="M4 6l4 4 4-4" fill="none" stroke="#666" stroke-width="2" /></svg>
            </div>
          </div>
        </div>
        <button class="side-btn">单构件输入</button>
        <button class="side-btn">报表预览</button>
      </aside>

      <section class="work">
        <Strip :spec="bar2" cls="s2 dim" />
        <div class="row3">
          <Strip :spec="bar3a" cls="s3a" />
          <Strip :spec="bar3b" cls="s3b" />
        </div>
        <div class="row4">
          <Strip :spec="bar4" cls="s4" />
          <div class="stub"><i class="grip"></i></div>
        </div>

        <div class="canvas">
          <svg class="scene" viewBox="259 168 1107 305">
            <polygon points="1145,168 1366,168 1366,384 1042,400" fill="#434343" />
            <g fill="none" shape-rendering="crispEdges">
              <path d="M259 419L404 413L820 393L1039 382M396 348L404 395M1003.500 170L1036 362M1119 168L1120 175" stroke="#f00" />
              <path :d="mesh" stroke="#a39890" stroke-width="2" />
              <path d="M404 394L1035 364M411 431L1042 400" stroke="#fff" stroke-width="2" />
              <path d="M404 394L411 431M1035 364L1042 400M411 431L506 168M1042 400L1145 168M404 394L502 168M521 180L820 168M412 431L521 180" stroke="#fff" stroke-width="1.600" />
              <path d="M442 322L820 303L1069 292" stroke="#0ff" stroke-width="2" />
              <path d="M850 296H865M851 309L914 299M886 297H897" stroke="#f0f" stroke-width="2" />
              <path d="M442 325L446 345" stroke="#ff0" stroke-width="2" />
            </g>
            <text x="747" y="286" class="cad" fill="#c8ccd0">3285</text>
            <text x="437" y="313" class="cad" fill="#dcdcdc">120</text>
            <text x="440" y="354" class="cad green">(10*d)</text>
            <text x="747" y="328" class="cad green cjk">净长-保护层+设定弯折</text>
            <text x="747" y="370" class="cad green">3300-15+10*d</text>

            <!-- axis gizmo and grid bubbles -->
            <g>
              <path d="M313 423L306 388" stroke="#0f0" stroke-width="4" />
              <path d="M306 379l-4 11h8z" fill="#0f0" />
              <path d="M313 423L323 405" stroke="#1e78ff" stroke-width="4" />
              <path d="M324 402l-8 7 7 3z" fill="#1e78ff" />
              <path d="M313 423L352 421" stroke="#f00" stroke-width="4" />
              <path d="M362 421l-11-5v10z" fill="#f00" />
              <path d="M316 385l5 5 5-5M321 390v5" fill="none" stroke="#0c0" />
              <path d="M347 403l10 10M357 403l-10 10" stroke="#f00" />
              <path d="M312 393h7l-7 7h7" fill="none" stroke="#1e78ff" />
              <polygon points="263,409 278,409 283,414 283,425 278,431 263,431 259,425 259,414" fill="#000" stroke="#0a7a0a" stroke-dasharray="2 1" />
              <text x="271" y="425" text-anchor="middle" font-size="14" fill="#ddd" font-family="Liberation Sans">A1</text>
              <polygon points="999,171 1011,171 1017,177 1017,186 1011,192 999,192 994,186 994,177" fill="none" stroke="#0a7a0a" stroke-dasharray="2 1" />
              <path d="M1003.500 170L1007 192" stroke="#f00" />
            </g>
          </svg>

          <div class="panel">
            <div class="panel-title">钢筋显示控制面板</div>
            <ul class="panel-list">
              <li v-for="c in panelChecks" :key="c">
                <svg viewBox="0 0 11 11"><rect x=".5" y=".5" width="10" height="10" fill="#fff" stroke="#999" /><path d="M2.500 5.500l2 2 4-5" fill="none" stroke="#444" /></svg>
                {{ c }}
              </li>
            </ul>
          </div>
        </div>

        <div class="snaprow">
          <Strip :spec="barSnap" cls="snap" />
        </div>

        <div class="table-panel">
          <div class="table-grip">
            <svg viewBox="0 0 12 12"><rect x=".5" y=".5" width="11" height="11" fill="#fde8e4" stroke="#666" /><path d="M2 2l8 8M10 2l-8 8" stroke="#555" /></svg>
          </div>
          <div class="table-main">
            <Strip :spec="barTable" cls="stable" />
            <div class="grid-box">
              <table class="grid">
                <colgroup>
                  <col v-for="(w, i) in columns" :key="i" :style="{ width: w + 'px' }" />
                </colgroup>
                <thead>
                  <tr>
                    <th v-for="(c, i) in headers" :key="i" :class="{ blank: i === 0 }">
                      <span v-for="(p, j) in runs(c)" :key="j" :class="{ fixed: p.fixed }">{{ p.s }}</span>
                    </th>
                  </tr>
                </thead>
                <tbody>
                  <tr v-for="r in rows" :key="r.no" :class="r.cls">
                    <td class="rowno"><span class="fixed">{{ r.no }}</span></td>
                    <td class="name freeze">
                      <span v-for="(p, j) in runs(r.name)" :key="j" :class="{ fixed: p.fixed }">{{ p.s }}</span>
                    </td>
                    <td><span class="fixed">{{ r.dia }}</span></td>
                    <td class="mid">{{ r.grade }}</td>
                    <td><span class="fixed">{{ r.fig }}</span></td>
                    <td class="shape">
                      <svg v-if="r.shape" viewBox="0 0 201 33">
                        <path d="M34 11V24H172" fill="none" stroke="#000" stroke-width="1.800" />
                        <text x="9" y="22" font-size="11.500" font-family="Liberation Sans">120</text>
                        <text x="97" y="17" text-anchor="middle" font-size="11" fill="#f00" font-family="Liberation Sans">{{ r.shape }}</text>
                      </svg>
                      <svg v-else viewBox="0 0 201 28">
                        <path d="M52 25L39 12V7H168V13L155 25" fill="none" stroke="#000" stroke-width="1.800" />
                        <text x="100" y="20" text-anchor="middle" font-size="11.500" font-family="Liberation Sans">170</text>
                      </svg>
                    </td>
                    <td><span class="fixed">{{ r.formula }}</span></td>
                    <td class="desc">
                      <span v-for="(p, j) in runs(r.desc)" :key="j" :class="{ fixed: p.fixed }">{{ p.s }}</span>
                    </td>
                    <td><span class="fixed">{{ r.len }}</span></td>
                    <td><span class="fixed">{{ r.count }}</span></td>
                    <td><span class="fixed">0</span></td>
                    <td><span class="fixed">0</span></td>
                    <td><span class="fixed">{{ r.weight }}</span></td>
                  </tr>
                  <tr class="empty">
                    <td class="rowno"><span class="fixed">4</span></td>
                    <td class="freeze"></td>
                    <td v-for="n in 11" :key="n"></td>
                  </tr>
                </tbody>
              </table>
              <div class="hscroll">
                <svg viewBox="0 0 16 16"><path d="M10 4l-4 4 4 4" fill="none" stroke="#555" stroke-width="2" /></svg>
                <div class="htrack"><i class="hthumb"></i></div>
                <svg viewBox="0 0 16 16"><path d="M6 4l4 4-4 4" fill="none" stroke="#555" stroke-width="2" /></svg>
              </div>
            </div>
          </div>
        </div>
      </section>
    </main>

    <footer class="status">
      <div class="cell" style="width: 148px"><span class="fixed">X=295847 Y=7800</span></div>
      <div class="cell" style="width: 77px">层高<span class="fixed">:2.8m</span></div>
      <div class="cell" style="width: 97px">底标高<span class="fixed">:14.75m</span></div>
      <div class="cell" style="width: 48px"><span class="fixed">1(1)</span></div>
      <div class="cell grow"></div>
      <div class="cell" style="width: 70px"><span class="fixed">241.3 FPS</span></div>
    </footer>

    <div class="taskbar">
      <div class="start"><svg viewBox="0 0 24 24" v-html="icons.start"></svg></div>
      <div class="search">
        <svg class="cortana" viewBox="0 0 24 24" v-html="icons.ring24"></svg>
        <span>在这里输入你要搜索的内容</span>
        <svg class="micro" viewBox="0 0 24 24" v-html="icons.micro"></svg>
      </div>
      <div class="apps">
        <div v-for="a in ['taskview', 'fan', 'iedark', 'swirl', 'edge', 'ie', 'folder', 'bird', 'green', 'app']" :key="a" class="app" :class="a">
          <svg viewBox="0 0 24 24" v-html="icons[a]"></svg>
        </div>
      </div>
      <div class="tray">
        <span class="tray-text">链接</span>
        <svg class="t1" viewBox="0 0 24 24" v-html="icons.chevup"></svg>
        <svg class="t2" viewBox="0 0 24 24" v-html="icons.battery"></svg>
        <svg class="t3" viewBox="0 0 24 24" v-html="icons.wifi"></svg>
        <svg class="t4" viewBox="0 0 24 24" v-html="icons.speaker"></svg>
        <svg class="t5" viewBox="0 0 24 24" v-html="icons.keys"></svg>
        <span class="tray-text ime">中</span>
        <span class="sg small">S</span>
        <div class="clock"><span>12:52</span><span>2018/6/5</span></div>
        <svg class="t6" viewBox="0 0 24 24" v-html="icons.notify"></svg>
      </div>
    </div>

    <!-- floating over the window: IME bar and score bubble -->
    <div class="badge">68</div>
    <div class="ime-bar">
      <span class="sg">S</span>
      <b>英</b>
      <em>•,</em>
      <svg viewBox="0 0 24 24" v-html="icons.smile"></svg>
      <svg viewBox="0 0 24 24" v-html="icons.smic"></svg>
      <svg viewBox="0 0 24 24" v-html="icons.skeys"></svg>
      <svg viewBox="0 0 24 24" v-html="icons.sperson"></svg>
      <svg viewBox="0 0 24 24" v-html="icons.sshirt"></svg>
      <svg viewBox="0 0 24 24" v-html="icons.swrench"></svg>
    </div>
  </div>
</template>

<style scoped>
.screen {
  position: relative;
  display: flex;
  flex-direction: column;
  width: 1366px;
  height: 768px;
  overflow: hidden;
  background: #efefef;
  color: #111;
  font-family: "Noto Sans CJK SC", "Noto Sans", sans-serif;
  font-size: 12px;
  line-height: 16px;
}
.fixed {
  font-family: "Liberation Mono", monospace;
  font-size: 12px;
  letter-spacing: -1.2px;
}

.titlebar {
  display: flex;
  align-items: center;
  height: 23px;
  padding-left: 3px;
  background: #fff;
}
.logo {
  width: 15px;
  height: 15px;
  margin-right: 5px;
}
.title {
  white-space: nowrap;
  letter-spacing: 0.4px;
}
.winbtns {
  display: flex;
  align-items: center;
  margin-left: auto;
}
.min {
  width: 10px;
  height: 1px;
  margin-right: 37px;
  background: #222;
}
.restore,
.close {
  width: 11px;
  height: 11px;
}
.restore {
  margin-right: 35px;
}
.close {
  margin-right: 20px;
}

.menubar {
  display: flex;
  align-items: center;
  height: 31px;
  padding-left: 7px;
  background: #f6f6f6;
  white-space: nowrap;
}
.menu {
  margin-right: 10.6px;
}
.menu-extra {
  display: flex;
  align-items: center;
  gap: 5px;
}
.menu-extra svg {
  width: 15px;
  height: 15px;
}
.change {
  margin-left: -5px;
}
.tri {
  width: 0;
  height: 0;
  margin-left: 12px;
  border-top: 3px solid #222;
  border-left: 3px solid transparent;
  border-right: 3px solid transparent;
}
.bot {
  margin-left: 2px;
  gap: 1px;
}
.ask {
  width: 187px;
  height: 28px;
  margin-left: 8px;
  background: #fff;
  color: #5a2d0c;
  text-align: center;
  line-height: 28px;
}
.account {
  margin-left: 6px;
  gap: 4px;
}
.account svg {
  width: 16px;
  height: 16px;
}
.phone {
  letter-spacing: 0.25px;
}
.account .tri {
  margin-left: 3px;
}
.beans {
  margin-left: 8px;
}
.bell {
  width: 16px;
  height: 18px;
  margin-left: 9px;
}
.menu-more {
  margin-left: auto;
  margin-right: 4px;
  font-weight: 700;
  line-height: 10px;
  align-self: flex-start;
  margin-top: 2px;
}

.toprow {
  display: flex;
  height: 28px;
  gap: 1px;
}

.body {
  display: flex;
  flex: 1;
  min-height: 0;
}
.side {
  display: flex;
  flex-direction: column;
  width: 254px;
  margin: 2px 5px 3px 0;
}
.side-head {
  display: flex;
  align-items: center;
  height: 15px;
  background: #0a50d8;
  color: #fff;
  font-size: 13px;
  letter-spacing: 0.2px;
}
.pin {
  width: 11px;
  height: 11px;
  margin-left: auto;
  margin-right: 4px;
}
.side-x {
  width: 17px;
  height: 13px;
  margin-right: 1px;
}
.side-btn {
  height: 22px;
  margin: 1px 0 0;
  padding: 0;
  border: 1px solid #a0a0a0;
  border-width: 1px 1px 1px 0;
  background: #f0f0f0;
  color: #111;
  font: inherit;
}
.tree-box {
  display: flex;
  flex: 1;
  min-height: 0;
  flex-direction: column;
  margin: 0 0 1px 2px;
  border: 1px solid #9a9a9a;
  border-width: 1px 1px 2px 1px;
  background: #fff;
}
.tree-tools {
  display: flex;
  gap: 7px;
  padding: 4px 0 0 4px;
  box-sizing: border-box;
  height: 26px;
}
.tree-tools svg {
  width: 16px;
  height: 16px;
}
.tree-main {
  display: flex;
  flex: 1;
  min-height: 0;
}
.tree {
  position: relative;
  flex: 1;
  margin: 0;
  padding: 2px 0 0;
  overflow: hidden;
  list-style: none;
  /* top level guide line */
  background: repeating-linear-gradient(to bottom, #777 0 1px, transparent 1px 2px) 12px 0 / 1px 100% no-repeat;
}
.tree li {
  position: relative;
  display: flex;
  align-items: center;
  height: 16px;
  white-space: nowrap;
}
.leaf {
  padding-left: 42px;
}
.leaf::before {
  content: "";
  position: absolute;
  left: 31px;
  top: 8px;
  width: 11px;
  border-top: 1px dotted #666;
}
.leaf::after {
  content: "";
  position: absolute;
  left: 31px;
  top: 0;
  bottom: 0;
  border-left: 1px dotted #666;
}
.leaf.last::after {
  bottom: 8px;
}
.top {
  padding-left: 6px;
}
.top::before {
  content: "";
  position: absolute;
  left: 19px;
  top: 8px;
  width: 4px;
  border-top: 1px dotted #666;
}
.exp {
  width: 11px;
  height: 11px;
  margin-right: 5px;
  background: #fff;
}
.ti {
  flex: none;
  width: 16px;
  height: 16px;
}
.seled {
  background: #e8e8e8;
}
.tl {
  margin-left: 4px;
  padding: 0 2px 0 1px;
  line-height: 16px;
}
.top .tl {
  margin-left: 5px;
  font-size: 12px;
}
.sel {
  background: #d9d9d9;
}
.vscroll {
  display: flex;
  flex-direction: column;
  width: 15px;
  margin-right: 2px;
  background: #f0f0f0;
}
.vscroll svg {
  width: 15px;
  height: 15px;
  flex: none;
  margin: 2px 0;
}
.vtrack {
  flex: 1;
  padding-top: 48px;
}
.vthumb {
  display: block;
  height: 241px;
  background: #cdcdcd;
}

.work {
  display: flex;
  flex: 1;
  min-width: 0;
  flex-direction: column;
}
.row3,
.row4 {
  display: flex;
  height: 29px;
}
.canvas {
  position: relative;
  height: 305px;
  margin-left: -1px;
  background: #000;
  overflow: hidden;
}
.scene {
  display: block;
  width: 1107px;
  height: 305px;
}
.cad {
  font-family: "Liberation Sans", sans-serif;
  font-size: 25.800px;
}
.green {
  fill: #00c400;
}
.cjk {
  font-family: "Noto Sans CJK SC", sans-serif;
  font-size: 27.500px;
}
.panel {
  position: absolute;
  left: 9px;
  top: 2px;
  display: flex;
  flex-direction: column;
  width: 168px;
  height: 178px;
  border: 1px solid #8a8a8a;
  background: #fff;
}
.panel-title {
  height: 30px;
  padding-left: 8px;
  color: #9a9a9a;
  line-height: 28px;
}
.panel-list {
  flex: 1;
  margin: 0 1px 1px;
  padding: 0 0 0 4px;
  list-style: none;
  border: 2px solid #8f8f8f;
  border-right-color: #8f8f8f;
}
.panel-list li {
  display: flex;
  align-items: center;
  gap: 3px;
  height: 12px;
  white-space: nowrap;
  line-height: 12px;
}
.panel-list svg {
  flex: none;
  width: 11px;
  height: 11px;
}
.snaprow {
  height: 30px;
  padding: 3px 0 0 211px;
}
.table-panel {
  display: flex;
  flex: 1;
  min-height: 0;
  margin-left: -1px;
}
.table-grip {
  width: 13px;
  padding: 3px 0 0 1px;
  background: radial-gradient(circle, #b5b5b5 1px, transparent 1.2px) 2px 22px / 4px 4px repeat-x, #f0f0f0;
}
.table-grip svg {
  display: block;
  width: 12px;
  height: 12px;
}
.table-main {
  display: flex;
  flex: 1;
  min-width: 0;
  flex-direction: column;
  margin-right: 3px;
}
.grid-box {
  display: flex;
  flex: 1;
  min-height: 0;
  flex-direction: column;
  border: 1px solid #b4b4b4;
  border-width: 1px 1px 2px;
  background: #fff;
}
.grid {
  width: 1090px;
  border-collapse: collapse;
  table-layout: fixed;
  font-size: 12px;
  line-height: 12px;
}
.grid th,
.grid td {
  padding: 0 2px;
  overflow: hidden;
  border: 1px solid #b8b8b8;
  white-space: nowrap;
}
.grid th {
  height: 20px;
  background: linear-gradient(#fbdc9f, #f0ba5e);
  color: #5b0a6b;
  font-weight: 400;
  padding: 0;
}
.grid th:first-child {
  background: #f3f3f3;
}
.grid th .fixed {
  font-size: 10px;
  letter-spacing: 0;
}
.rowno {
  background: #f3f3f3;
  text-align: center;
}
.name,
.desc {
  white-space: normal !important;
  word-break: break-all;
}
.mid {
  text-align: center;
}
.freeze {
  border-right: 1px solid #000 !important;
}
.cur td,
.data td {
  height: 33px;
}
.low td {
  height: 28px;
}
.empty td {
  height: 18px;
}
.empty .rowno .fixed {
  font-weight: 700;
}
.cur td {
  background: #8dd5da;
}
.cur .rowno {
  background: #ffd28c;
  color: #6a0a6a;
}
.cur .name {
  background: #a8ead8;
}
.data td {
  background: #ccffd6;
}
.data .rowno {
  background: #f3f3f3;
}
.grid .shape {
  padding: 0;
  line-height: 0;
}
.shape svg {
  display: block;
  width: 201px;
}
.hscroll {
  display: flex;
  align-items: center;
  height: 15px;
  margin-top: auto;
  margin-bottom: 2px;
  background: #f0f0f0;
}
.hscroll svg {
  flex: none;
  width: 16px;
  height: 15px;
}
.htrack {
  flex: 1;
  height: 15px;
}
.hthumb {
  display: block;
  width: 586px;
  height: 15px;
  background: #cdcdcd;
}

.status {
  display: flex;
  gap: 2px;
  height: 20px;
  background: #f0f0f0;
}
.cell {
  padding-left: 1px;
  border: 1px solid #dcdcdc;
  background: #fff;
  line-height: 17px;
  white-space: nowrap;
}
.grow {
  flex: 1;
}

.taskbar {
  display: flex;
  height: 40px;
  background: #06101a;
}
.start {
  display: flex;
  align-items: center;
  justify-content: center;
  width: 48px;
  background: #000;
}
.start svg {
  width: 18px;
  height: 18px;
}
.search {
  display: flex;
  align-items: center;
  width: 344px;
  padding-left: 8px;
  background: #333;
  color: #8c8c8c;
  font-size: 14px;
}
.cortana {
  width: 23px;
  height: 23px;
  margin-right: 5px;
}
.micro {
  width: 18px;
  height: 20px;
  margin-left: auto;
  margin-right: 13px;
}
.apps {
  display: flex;
  width: 498px;
  padding-left: 0;
}
.app {
  display: flex;
  align-items: center;
  justify-content: center;
  width: 49px;
  height: 40px;
  position: relative;
}
.app svg {
  width: 23px;
  height: 23px;
}
.taskview {
  width: 40px;
  margin-left: -6px;
}
.fan {
  width: 55px;
  margin-left: 6px;
}
.swirl svg {
  width: 19px;
  height: 19px;
}
.edge {
  margin-left: 3px;
}
.folder::after,
.bird::after,
.green::after,
.app.app::after {
  content: "";
  position: absolute;
  left: 4px;
  right: 4px;
  bottom: 0;
  height: 2px;
  background: #76b9ed;
}
.taskview::after,
.fan::after,
.iedark::after,
.swirl::after,
.edge::after,
.ie::after {
  display: none;
}
.app.app {
  background: #35424a;
}
.taskview.app,
.fan.app,
.iedark.app,
.swirl.app,
.edge.app,
.ie.app,
.folder.app,
.bird.app,
.green.app {
  background: transparent;
}
.tray {
  display: flex;
  flex: 1;
  align-items: center;
  color: #e8e8e8;
  padding-left: 102px;
}
.tray svg {
  flex: none;
}
.tray-text {
  font-size: 12px;
}
.t1 {
  width: 18px;
  height: 18px;
  margin-left: 8px;
}
.t2 {
  width: 18px;
  height: 18px;
  margin-left: 30px;
}
.t3 {
  width: 16px;
  height: 16px;
  margin-left: 9px;
}
.t4 {
  width: 16px;
  height: 16px;
  margin-left: 7px;
}
.t5 {
  width: 24px;
  height: 18px;
  margin-left: 8px;
}
.ime {
  margin-left: 10px;
  font-size: 13px;
}
.sg {
  display: inline-block;
  flex: none;
  width: 24px;
  height: 24px;
  background: #f0501e;
  border-radius: 5px;
  color: #fff;
  font: 700 21px/24px "Liberation Sans", sans-serif;
  text-align: center;
  transform: rotate(-12deg);
}
.sg.small {
  width: 15px;
  height: 15px;
  margin-left: 13px;
  border-radius: 3px;
  font-size: 13px;
  line-height: 15px;
}
.clock {
  display: flex;
  flex-direction: column;
  align-items: center;
  width: 60px;
  margin-left: 20px;
  line-height: 19px;
  font-size: 12px;
}
.t6 {
  width: 17px;
  height: 18px;
  margin-left: 18px;
}

.badge {
  position: absolute;
  left: 1014px;
  top: -27px;
  width: 45px;
  height: 45px;
  box-sizing: border-box;
  padding-top: 27px;
  border-radius: 50%;
  border: 2px solid #8f9a90;
  background: #3db54a;
  color: #fff;
  font: 700 11px/14px "Liberation Sans", sans-serif;
  text-align: center;
  box-shadow: 0 1px 3px #777;
}
.ime-bar {
  position: absolute;
  left: 689px;
  top: 14px;
  display: flex;
  align-items: center;
  gap: 6px;
  width: 207px;
  height: 24px;
  box-sizing: border-box;
  padding-left: 1px;
  border: 1px solid #b4c6d8;
  background: #f6fafd;
}
.ime-bar .sg {
  margin: -2px 3px 0 0;
  width: 25px;
  height: 26px;
}
.ime-bar b {
  color: #2a78d6;
  font-size: 14px;
}
.ime-bar em {
  width: 10px;
  margin: 0 3px 0 3px;
  color: #2a78d6;
  font: 700 13px/12px "Liberation Sans", sans-serif;
}
.ime-bar svg {
  flex: none;
  width: 16px;
  height: 18px;
}
</style>

<style>
/* bars are rendered by the Strip function, so their classes are not scoped */
.strip {
  display: flex;
  align-items: center;
  gap: 7px;
  height: 100%;
  box-sizing: border-box;
  background: linear-gradient(#fdfdfd, #f4f4f4);
  white-space: nowrap;
}
.ic {
  flex: none;
  width: 16px;
  height: 16px;
}
.tool {
  display: flex;
  align-items: center;
  gap: 4px;
}
.tool .caret {
  margin-left: 2px;
}
.tool.tight .caret {
  margin-right: -2px;
  margin-left: -1px;
}
.tool.on {
  height: 24px;
  padding: 0 3px;
  margin: 0 -4px;
  border: 1px solid #3d8fd1;
  background: #dcebf7;
}
.tool.off span,
.dim .tool span {
  color: #8a8a8a;
}
.tool.off .ic,
.dim .ic {
  opacity: 0.75;
}
.caret {
  flex: none;
  width: 0;
  height: 0;
  border-top: 3px solid #222;
  border-left: 3.5px solid transparent;
  border-right: 3.5px solid transparent;
}
.sep {
  flex: none;
  width: 1px;
  height: 18px;
  margin-right: -2px;
  background: #b8b8b8;
}
.grip {
  flex: none;
  width: 3px;
  height: 16px;
  margin-right: -3px;
  background: repeating-linear-gradient(#b0b0b0 0 2px, transparent 2px 4px);
}
.more {
  margin-left: auto;
  font-weight: 700;
  line-height: 10px;
  align-self: flex-start;
  margin-top: 3px;
}
.combo {
  display: flex;
  flex: none;
  align-items: center;
  justify-content: space-between;
  height: 24px;
  box-sizing: border-box;
  padding: 0 3px 0 3px;
  background: #fff;
}
.spin {
  display: flex;
  flex: none;
  align-items: center;
  justify-content: space-between;
  height: 23px;
  box-sizing: border-box;
  padding: 0 4px 0 3px;
  border: 1px solid #6f6f6f;
  background: #fff;
  color: #777;
}
.spin span {
  margin-left: auto;
  margin-right: 7px;
}
.spin b {
  display: flex;
  flex-direction: column;
  gap: 6px;
}
.tri-up {
  width: 0;
  height: 0;
  border-bottom: 3px solid #444;
  border-left: 3.5px solid transparent;
  border-right: 3.5px solid transparent;
}
.spin .caret {
  border-top-color: #444;
}
.box {
  flex: none;
  width: 10px;
  height: 10px;
  margin-left: 4px;
  margin-right: 3px;
  border: 1px solid #999;
  background: #fff;
}
.plain {
  color: #666;
}

.s1a {
  width: 152px;
  padding: 0 4px 0 5px;
  flex: none;
}
.s1b {
  width: 547px;
  flex: none;
  padding: 0 6px 0 4px;
}
.s1c {
  flex: 1;
  margin-left: 3px;
  padding: 0 4px 0 5px;
}
.s2 {
  width: 790px;
  height: 24px;
  margin-top: 2px;
  margin-bottom: 2px;
  padding-left: 3px;
  flex: none;
}
.s3a {
  margin-left: 3px;
  width: 563px;
  height: 27px;
  padding-left: 6px;
  flex: none;
}
.s3a .grip {
  margin-left: -7px;
  margin-right: -5px;
}
.s3b {
  width: 422px;
  margin-left: 75px;
  height: 27px;
  padding-left: 4px;
  flex: none;
}
.s4 {
  width: 851px;
  margin-left: 3px;
  height: 28px;
  padding-left: 9px;
  flex: none;
}
.s4 .tool.on {
  padding-right: 4px;
  margin-right: -6px;
}
.stub {
  width: 30px;
  height: 28px;
  margin-left: 206px;
  background: #fafafa;
  padding: 6px 0 0 3px;
  box-sizing: border-box;
}
.stub .grip {
  display: block;
}
.snap {
  width: 675px;
  height: 24px;
  padding-left: 2px;
  gap: 5px;
}
.snap .sep {
  margin: 0 -4px 0 -2px;
}
.snap .grip {
  margin-right: 0;
}
.snap .tool.on {
  margin: 0;
  padding: 0 3px;
}
.snap .tool.on + .tool.on {
  margin-left: -7px;
}
.snap .plain {
  color: #777;
}
.snap .combo {
  margin-left: 2px;
}
.snap .spin {
  margin-right: -3px;
}
.snap .plain:nth-last-child(3) {
  color: #111;
}
.stable {
  height: 25px;
  flex: none;
  padding-left: 3px;
  background: #fdfdfd;
}
.stable .plain {
  color: #111;
}
.stable .plain:last-child {
  margin-left: 0;
  font-family: "Noto Sans CJK SC", sans-serif;
}
html,
body {
  margin: 0;
  background: #efefef;
}
</style>
